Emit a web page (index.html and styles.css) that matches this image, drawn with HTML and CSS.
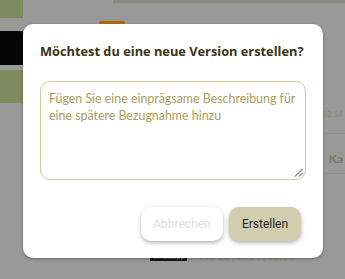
FILE: index.html
```html
<!DOCTYPE html>
<html lang="de">
<head>
<meta charset="utf-8">
<title>Version erstellen</title>
<link rel="stylesheet" href="styles.css">
</head>
<body>
<div class="app">
  <aside class="side">
    <div class="blk green"></div>
    <div class="blk gap"></div>
    <div class="blk black"></div>
    <div class="blk gap2"></div>
    <div class="blk green2"></div>
  </aside>
  <main class="main">
    <div class="topbar"></div>
    <div class="orange"></div>
    <div class="rowline r1"><span class="meta-right">02:14</span></div>
    <div class="rowline r2"><span class="ka">Ka</span></div>
    <div class="bottom-row">
      <span class="tag">Whatsapp</span>
      <span class="meta">Feb 20 | 2024 | 02:14</span>
    </div>
  </main>
</div>
<div class="overlay">
  <div class="modal">
    <h2 class="title">Möchtest du eine neue Version erstellen?</h2>
    <div class="desc" role="textbox" aria-multiline="true" contenteditable="true">
      <span class="ph">Fügen Sie eine einprägsame Beschreibung für eine spätere Bezugnahme hinzu</span>
      <svg class="grip" width="9" height="9" viewBox="0 0 9 9" aria-hidden="true">
        <line x1="1" y1="8.5" x2="8.5" y2="1" stroke="#333" stroke-width="1"/>
        <line x1="5" y1="8.5" x2="8.5" y2="5" stroke="#333" stroke-width="1"/>
      </svg>
    </div>
    <div class="actions">
      <button class="btn cancel">Abbrechen</button>
      <button class="btn create">Erstellen</button>
    </div>
  </div>
</div>
</body>
</html>
```
FILE: styles.css
```css
* { box-sizing: border-box; }
html, body { margin: 0; padding: 0; }
body {
  width: 345px;
  height: 279px;
  overflow: hidden;
  background: #999999;
  font-family: "Lato", "Noto Sans", sans-serif;
  position: relative;
}
.app {
  display: flex;
  width: 345px;
  height: 279px;
}
.side {
  width: 23px;
  display: flex;
  flex-direction: column;
}
.blk.green { height: 18px; background: #7e8a5e; }
.blk.gap { height: 13px; }
.blk.black { height: 34px; background: #050505; }
.blk.gap2 { height: 5px; }
.blk.green2 { height: 33px; background: #7e8a5e; }
.main {
  flex: 1;
  display: flex;
  flex-direction: column;
}
.topbar {
  height: 3px;
  margin-left: 90px;
  background: #8c8a80;
}
.orange {
  width: 26px;
  height: 3px;
  margin: 18px 0 0 76px;
  border-radius: 2px;
  background: #b06a10;
}
.rowline { height: 40px; border-bottom: 1px solid #8f8f8f; display: flex; justify-content: flex-end; align-items: center; padding-right: 2px; }
.r1 { margin-top: 70px; }
.meta-right { font-size: 8px; color: #8e8a70; }
.ka { font-size: 12px; color: #7d7860; font-weight: bold; margin-top: 10px; }
.bottom-row {
  margin-top: 76px;
  display: flex;
  align-items: center;
  gap: 12px;
  padding-left: 127px;
}
.tag { background: #1a1a1a; color: #777; font-size: 7px; padding: 1px 3px; }
.meta { font-size: 10px; color: #8e8a6a; white-space: nowrap; }

.overlay {
  position: absolute;
  left: 0; top: 0;
  width: 345px; height: 279px;
}
.modal {
  position: absolute;
  left: 23px;
  top: 24px;
  width: 300px;
  height: 234px;
  background: #ffffff;
  border-radius: 10px;
  box-shadow: 0 1px 3px rgba(0,0,0,0.35);
  padding: 18px 17px 0 17px;
  display: flex;
  flex-direction: column;
}
.title {
  margin: 0;
  font-family: "Open Sans", sans-serif;
  font-size: 12.8px;
  font-weight: 700;
  color: #3a3312;
  line-height: 18px;
  white-space: nowrap;
}
.desc {
  position: relative;
  margin-top: 21px;
  width: 266px;
  height: 99px;
  border: 1px solid #cfc59f;
  border-radius: 10px;
  padding: 8px 4px 8px 8px;
  font-family: "Lato", sans-serif;
  font-size: 12.4px;
  line-height: 17px;
  outline: none;
  background: #fff;
}
.ph { color: #ad9c5a; }
.grip {
  position: absolute;
  right: 2px;
  bottom: 2px;
}
.actions {
  margin-top: 27px;
  display: flex;
  justify-content: flex-end;
  gap: 6px;
  padding-right: 5px;
}
.btn {
  height: 34px;
  border: none;
  border-radius: 10px;
  font-family: "Roboto", sans-serif;
  font-size: 12px;
  box-shadow: 0 2px 4px rgba(0,0,0,0.3);
}
.cancel { width: 82px; background: #ffffff; color: #dedede; }
.create { width: 72px; background: #d3cdaf; color: #222; }
```
